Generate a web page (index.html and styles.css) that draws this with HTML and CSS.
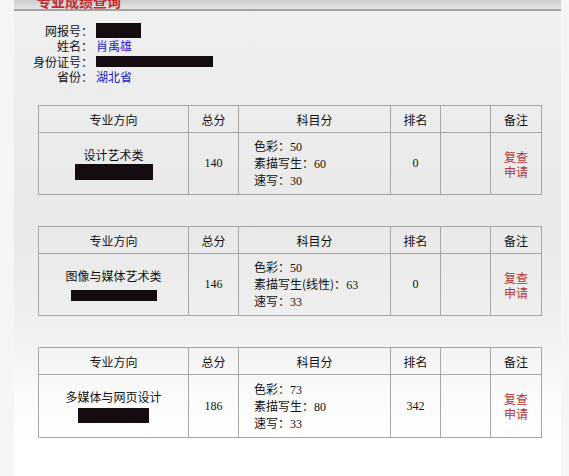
FILE: index.html
```html
<!DOCTYPE html>
<html lang="zh-CN">
<head>
<meta charset="utf-8">
<title>专业成绩查询</title>
<link rel="stylesheet" href="styles.css">
</head>
<body>
<div class="page">
  <div class="panel">
    <div class="titlebar"><h1>专业成绩查询</h1></div>
    <div class="info">
      <div class="row r-tall"><span class="lbl">网报号：</span><span class="val"><span class="redact rd-id"></span></span></div>
      <div class="row"><span class="lbl">姓名：</span><span class="val blue">肖禹雄</span></div>
      <div class="row r-tall"><span class="lbl">身份证号：</span><span class="val"><span class="redact rd-card"></span></span></div>
      <div class="row"><span class="lbl">省份：</span><span class="val blue">湖北省</span></div>
    </div>

    <table class="score">
      <colgroup><col class="c1"><col class="c2"><col class="c3"><col class="c4"><col class="c5"><col class="c6"></colgroup>
      <tr class="head"><th>专业方向</th><th>总分</th><th>科目分</th><th>排名</th><th></th><th>备注</th></tr>
      <tr class="body">
        <td class="major">设计艺术类<br><span class="redact rd-m1"></span></td>
        <td class="num">140</td>
        <td class="subj">色彩：<span class="n">50</span><br>素描写生：<span class="n">60</span><br>速写：<span class="n">30</span></td>
        <td class="num">0</td>
        <td></td>
        <td class="note">复查<br>申请</td>
      </tr>
    </table>

    <table class="score">
      <colgroup><col class="c1"><col class="c2"><col class="c3"><col class="c4"><col class="c5"><col class="c6"></colgroup>
      <tr class="head"><th>专业方向</th><th>总分</th><th>科目分</th><th>排名</th><th></th><th>备注</th></tr>
      <tr class="body">
        <td class="major">图像与媒体艺术类<br><span class="redact rd-m2"></span></td>
        <td class="num">146</td>
        <td class="subj">色彩：<span class="n">50</span><br>素描写生(线性)：<span class="n">63</span><br>速写：<span class="n">33</span></td>
        <td class="num">0</td>
        <td></td>
        <td class="note">复查<br>申请</td>
      </tr>
    </table>

    <table class="score">
      <colgroup><col class="c1"><col class="c2"><col class="c3"><col class="c4"><col class="c5"><col class="c6"></colgroup>
      <tr class="head"><th>专业方向</th><th>总分</th><th>科目分</th><th>排名</th><th></th><th>备注</th></tr>
      <tr class="body tall">
        <td class="major">多媒体与网页设计<br><span class="redact rd-m3"></span></td>
        <td class="num">186</td>
        <td class="subj">色彩：<span class="n">73</span><br>素描写生：<span class="n">80</span><br>速写：<span class="n">33</span></td>
        <td class="num">342</td>
        <td></td>
        <td class="note">复查<br>申请</td>
      </tr>
    </table>
  </div>
</div>
</body>
</html>
```

FILE: styles.css
```css
html, body {
  margin: 0;
  padding: 0;
}
body {
  background: #f3f5f9;
  font-family: "Noto Sans CJK SC", "Liberation Serif", serif;
  font-size: 12px;
  color: #111;
}
.page {
  display: flex;
  min-height: 476px;
}
.panel {
  margin-left: 14px;
  width: 547px;
  min-height: 476px;
  background: linear-gradient(#f0f0f1 0px, #ececec 120px, #e9e9e9 230px, #efefef 320px, #fbfbfb 400px, #ffffff 440px);
  overflow: hidden;
}
.titlebar {
  height: 9px;
  overflow: hidden;
  border-bottom: 2px solid #a2a2a2;
  background: linear-gradient(#cdcdcd, #e4e4e4);
}
.titlebar h1 {
  margin: -6px 0 0 23px;
  font-size: 14px;
  line-height: 14px;
  font-weight: bold;
  color: #c42a2a;
}
.info {
  margin-top: 11px;
  display: flex;
  flex-direction: column;
}
.row {
  display: flex;
  align-items: center;
  height: 15px;
  line-height: 15px;
}
.r-tall {
  height: 16px;
}
.lbl {
  width: 79px;
  text-align: right;
  color: #111;
}
.val {
  margin-left: 3px;
  display: flex;
  align-items: center;
}
.blue {
  color: #1b1bcf;
}
.redact {
  display: inline-block;
  background: #140c10;
  vertical-align: middle;
}
.rd-id { width: 45px; height: 15px; }
.rd-card { width: 117px; height: 11px; }
.rd-m1 { width: 78px; height: 16px; }
.rd-m2 { width: 86px; height: 11px; margin-top: 3px; }
.rd-m3 { width: 71px; height: 15px; }

.score {
  margin: 21px 0 0 24px;
  border-collapse: collapse;
  table-layout: fixed;
  width: 503px;
  font-size: 12px;
}
.score + .score {
  margin-top: 31px;
}
.c1 { width: 150px; }
.c2 { width: 50px; }
.c3 { width: 152px; }
.c4 { width: 50px; }
.c5 { width: 50px; }
.c6 { width: 51px; }
.score th, .score td {
  border: 1px solid #a6a6a6;
  padding: 0;
  text-align: center;
  vertical-align: middle;
}
.score th {
  font-weight: normal;
  height: 26px;
  color: #111;
}
.score .body td {
  height: 61px;
}
.score .body.tall td {
  height: 62px;
}
.major {
  line-height: 16px;
}
.num {
  font-family: "Liberation Serif", serif;
  font-size: 12px;
}
.subj {
  text-align: left !important;
  padding-left: 15px !important;
  line-height: 16px;
}
.n {
  font-family: "Liberation Serif", serif;
}
.note {
  color: #b83232;
  line-height: 15px;
}
```
